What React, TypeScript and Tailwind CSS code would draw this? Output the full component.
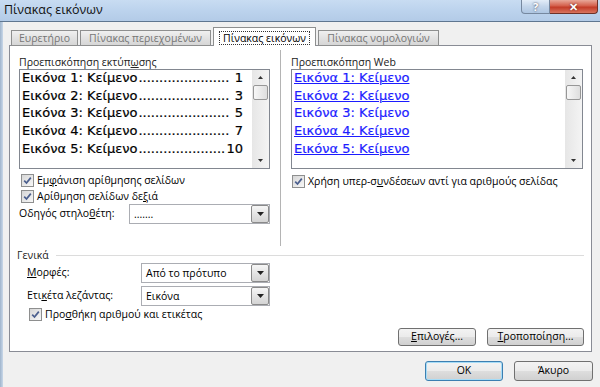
import React from "react";

function Check() {
  return (
    <span className="w-[13px] h-[13px] shrink-0 border border-[#8e8f8f] bg-[linear-gradient(135deg,#d6d6d6,#f7f7f7)] flex items-center justify-center">
      <svg width="9" height="9" viewBox="0 0 9 9">
        <path d="M1.2 4.6 L3.5 7 L7.8 1.6" stroke="#4b5f8e" strokeWidth="1.7" fill="none" />
      </svg>
    </span>
  );
}

function CheckRow({ children, className = "" }: { children: React.ReactNode; className?: string }) {
  return (
    <div className={"h-[16px] flex items-center " + className}>
      <Check />
      <span className="ml-[3px] leading-[16px] whitespace-nowrap">{children}</span>
    </div>
  );
}

function Arrow({ up = false }: { up?: boolean }) {
  return (
    <svg width="7" height="4" viewBox="0 0 7 4">
      <path d={up ? "M0 4 H7 L3.5 0 Z" : "M0 0 H7 L3.5 4 Z"} fill="#222" />
    </svg>
  );
}

function SmallArrow({ up = false }: { up?: boolean }) {
  return (
    <svg width="5" height="3" viewBox="0 0 5 3">
      <path d={up ? "M0 3 H5 L2.5 0 Z" : "M0 0 H5 L2.5 3 Z"} fill="#333" />
    </svg>
  );
}

function Combo({ className, text }: { className: string; text: string }) {
  return (
    <div className={"h-[20px] border border-[#abadb3] bg-white flex " + className}>
      <div className="flex-1 pl-[4px] leading-[18px] whitespace-nowrap overflow-hidden">{text}</div>
      <div className="w-[18px] border border-[#8a8a8a] rounded-[2px] bg-[linear-gradient(to_bottom,#f6f6f6,#e4e4e4_50%,#d4d4d4)] flex items-center justify-center">
        <Arrow />
      </div>
    </div>
  );
}

function ScrollBar() {
  return (
    <div className="w-[17px] shrink-0 bg-[linear-gradient(to_right,#e6e6e6,#f4f4f4)] flex flex-col">
      <div className="h-[15px] flex items-center justify-center">
        <SmallArrow up />
      </div>
      <div className="h-[15px] mx-[1px] border border-[#979797] rounded-[2px] bg-[linear-gradient(to_right,#f7f7f7,#dedede)]" />
      <div className="flex-1" />
      <div className="h-[15px] flex items-center justify-center">
        <SmallArrow />
      </div>
    </div>
  );
}

function ListBox({ children }: { children: React.ReactNode }) {
  return (
    <div className="h-[100px] border border-[#828790] bg-white flex">
      <div className="flex-1 min-w-0 pl-[2px] -mt-[1px] overflow-hidden font-['DejaVu_Sans',sans-serif] text-[13px] leading-[17.7px] [-webkit-text-stroke:0.2px_currentColor]">
        {children}
      </div>
      <ScrollBar />
    </div>
  );
}

function Btn({
  className,
  children,
  def = false,
}: {
  className: string;
  children: React.ReactNode;
  def?: boolean;
}) {
  return (
    <div
      className={
        "border rounded-[3px] flex items-center justify-center bg-[linear-gradient(to_bottom,#f3f3f3,#ebebeb_48%,#dddddd_52%,#d0d0d0)] " +
        (def ? "border-[#3c7fb1] shadow-[inset_0_0_0_1px_#a6dcf7] " : "border-[#707070] ") +
        className
      }
    >
      {children}
    </div>
  );
}

export default function App() {
  const entries: [string, string][] = [
    ["1", "1"],
    ["2", "3"],
    ["3", "5"],
    ["4", "7"],
    ["5", "10"],
  ];
  return (
    <div className="w-[600px] h-[387px] overflow-hidden bg-[#f0f0f0] font-['Open_Sans',sans-serif] text-[10.5px] text-black flex flex-col">
      {/* Title bar */}
      <div className="h-[22px] shrink-0 border-b border-[#5f7690] bg-[linear-gradient(to_bottom,#c8dcf2,#bcd3ed_50%,#b3cbe7)] flex items-start">
        <div className="pl-[4px] pt-[2px] text-[12.5px] leading-[16px] text-[#111]">Πίνακας εικόνων</div>
        <div className="ml-auto mr-[2px] flex">
          <div className="w-[29px] h-[14px] border border-t-0 border-[#76889f] rounded-bl-[4px] bg-[linear-gradient(to_bottom,#e3edf8,#c3d5ea_50%,#aec6e2)] flex items-center justify-center text-[11px] leading-[12px] font-bold text-white [text-shadow:0_0_2px_#334]">
            ?
          </div>
          <div className="w-[48px] h-[14px] border border-t-0 border-l-0 border-[#6e3128] rounded-br-[4px] bg-[linear-gradient(to_bottom,#e8a899,#d45f4b_45%,#c33c28_55%,#d8745f)] flex items-center justify-center text-[11px] leading-[12px] font-bold text-white [text-shadow:0_0_2px_#511]">
            ✕
          </div>
        </div>
      </div>

      <div className="flex-1 flex">
        {/* left frame strip */}
        <div className="w-[3px] bg-[linear-gradient(to_right,#9fb4cc,#c9d8e9)]" />
        <div className="flex-1 flex flex-col">
          {/* Tabs */}
          <div className="mt-[5px] h-[19px] -mb-[1px] pl-[8px] flex items-end relative z-10">
            <div className="w-[67px] h-[16px] border border-[#8e8f8f] bg-[linear-gradient(to_bottom,#f0f0f0,#e2e2e2_50%,#d6d6d6)] text-[#767676] flex items-center justify-center leading-[14px]">
              Ευρετήριο
            </div>
            <div className="ml-[2px] w-[131px] h-[16px] border border-[#8e8f8f] bg-[linear-gradient(to_bottom,#f0f0f0,#e2e2e2_50%,#d6d6d6)] text-[#767676] flex items-center justify-center leading-[14px]">
              Πίνακας περιεχομένων
            </div>
            <div className="ml-[2px] w-[103px] h-[19px] border border-b-0 border-[#8e8f8f] bg-white flex items-start justify-center pt-[3px]">
              <span className="border border-dotted border-[#333] px-[3px] leading-[12px]">Πίνακας εικόνων</span>
            </div>
            <div className="ml-[2px] w-[121px] h-[16px] border border-[#8e8f8f] bg-[linear-gradient(to_bottom,#f0f0f0,#e2e2e2_50%,#d6d6d6)] text-[#767676] flex items-center justify-center leading-[14px]">
              Πίνακας νομολογιών
            </div>
          </div>

          {/* Panel */}
          <div className="ml-[6px] w-[583px] h-[307px] border border-[#898c95] bg-white flex flex-col">
            {/* Row 1 */}
            <div className="pl-[9px] pt-[4px] flex items-start">
              <div className="w-[251px] pt-[5px] flex flex-col">
                <div className="h-[14px] leading-[14px] text-[#222]">
                  Προεπισκόπηση εκτύπ<u>ω</u>σης
                </div>
                <ListBox>
                  {entries.map(([n, p]) => (
                    <div key={n} className="flex pr-[9px] whitespace-nowrap">
                      <span className="shrink-0">{"Εικόνα " + n + ": Κείμενο "}</span>
                      <span className="shrink-0 pl-[1px]">{".".repeat(p.length > 1 ? 21 : 22)}</span>
                      <span className="shrink-0 ml-auto">{p}</span>
                    </div>
                  ))}
                </ListBox>
                <CheckRow className="mt-[3px] pl-[2px]">
                  Εμ<u>φ</u>άνιση αρίθμησης σελίδων
                </CheckRow>
                <CheckRow className="pl-[2px]">
                  Αρίθμηση σελίδων δε<u>ξ</u>ιά
                </CheckRow>
                <div className="flex items-center h-[20px]">
                  <div className="w-[110px] whitespace-nowrap">
                    Οδηγός στηλο<u>θ</u>έτη:
                  </div>
                  <Combo className="w-[141px]" text="......." />
                </div>
              </div>
              <div className="ml-[10px] w-px h-[196px] bg-[#b4b4b4]" />
              <div className="ml-[10px] w-[292px] pt-[5px] flex flex-col">
                <div className="h-[14px] leading-[14px] text-[#222]">Προεπισκόπηση Web</div>
                <ListBox>
                  {entries.map(([n]) => (
                    <div key={n} className="text-[#1c1cff]">
                      <span className={n === "3" ? "" : "underline"}>{"Εικόνα " + n + ": Κείμενο"}</span>
                    </div>
                  ))}
                </ListBox>
                <CheckRow className="mt-[4px] pl-[1px]">
                  Χρήση υπερ-σ<u>υ</u>νδέσεων αντί για αριθμούς σελίδας
                </CheckRow>
              </div>
            </div>

            {/* Γενικά */}
            <div className="mt-[2px] pl-[7px] pr-[7px] h-[14px] flex items-center">
              <span className="leading-[14px] text-[#222]">Γενικά</span>
              <div className="ml-[7px] flex-1 h-px bg-[#dcdcdc]" />
            </div>

            <div className="mt-[1px] pl-[17px] flex items-center h-[20px]">
              <div className="w-[114px]">
                <u>Μ</u>ορφές:
              </div>
              <Combo className="w-[129px]" text="Από το πρότυπο" />
            </div>
            <div className="mt-[3px] pl-[17px] flex items-center h-[20px]">
              <div className="w-[114px]">
                Ετι<u>κ</u>έτα λεζάντας:
              </div>
              <Combo className="w-[129px]" text="Εικόνα" />
            </div>
            <CheckRow className="pl-[19px]">
              Προ<u>σ</u>θήκη αριθμού και ετικέτας
            </CheckRow>

            <div className="mt-[6px] pr-[7px] flex justify-end">
              <Btn className="w-[78px] h-[18px]">
                <span>
                  <u>Ε</u>πιλογές...
                </span>
              </Btn>
              <Btn className="ml-[11px] w-[97px] h-[18px]">
                <span>
                  <u>Τ</u>ροποποίηση...
                </span>
              </Btn>
            </div>
          </div>

          {/* Dialog buttons */}
          <div className="mt-[9px] pr-[7px] flex justify-end">
            <Btn def className="w-[78px] h-[20px]">
              OK
            </Btn>
            <Btn className="ml-[11px] w-[79px] h-[20px]">Άκυρο</Btn>
          </div>
        </div>
      </div>
    </div>
  );
}
